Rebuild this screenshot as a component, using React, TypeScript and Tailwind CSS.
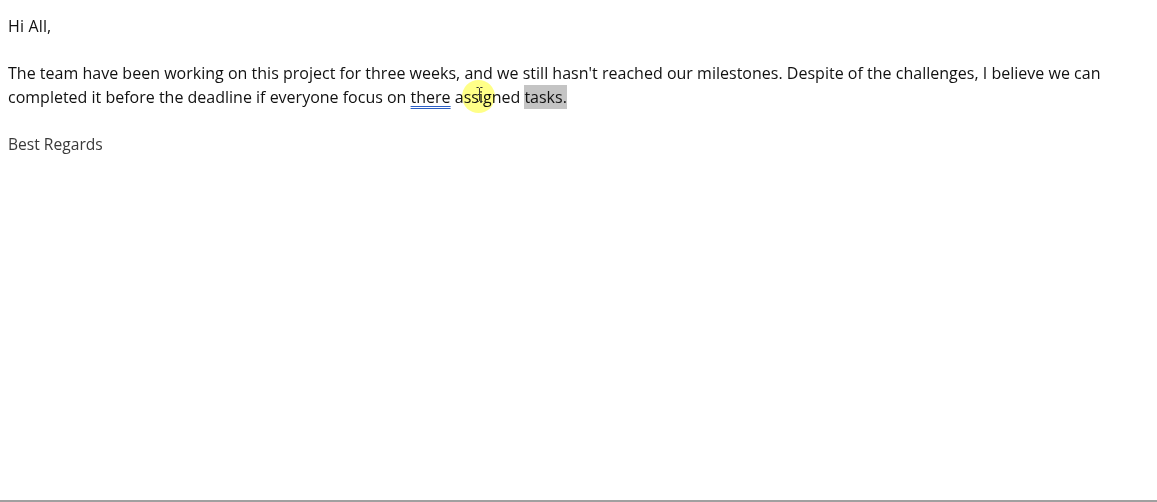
export default function App() {
  return (
    <div className="relative h-[502px] w-[1157px] overflow-hidden bg-white font-['Open_Sans',sans-serif] text-[16px] leading-[23.5px] text-[#111111]">
      <div className="px-2 pt-[15px]">
        <p className="tracking-[0.15px]">Hi All,</p>
        <p className="mt-[23.5px]">
          <span className="tracking-[0.014px]">
            The team have been working on this project for three weeks, and we still hasn't reached our milestones. Despite of the challenges, I believe we can
          </span>
          <br />
          completed it before the deadline if everyone focus on{" "}
          <span className="underline decoration-double decoration-[#2b5fc4] decoration-1 underline-offset-[3px]">there</span> assigned{" "}
          <span className="bg-[#c4c4c4] py-px">tasks.</span>
        </p>
        <p className="mt-[23.5px] text-[15.6px] text-[#3a3a3a]">Best Regards</p>
      </div>
      <div className="absolute left-[462px] top-[80px] h-[33px] w-[33px] rounded-full bg-[#ffff88] mix-blend-multiply" />
      <svg className="absolute left-[475px] top-[87px]" width="9" height="15" viewBox="0 0 9 15" fill="none" stroke="#333333" strokeWidth="1">
        <path d="M1.5 .5h2l1 1 1-1h2M4.5 1.5v12M1.5 14.5h2l1-1 1 1h2M3 7.5h3" />
      </svg>
      <div className="absolute bottom-0 left-0 h-[2px] w-full bg-[#a0a0a0]" />
    </div>
  );
}
